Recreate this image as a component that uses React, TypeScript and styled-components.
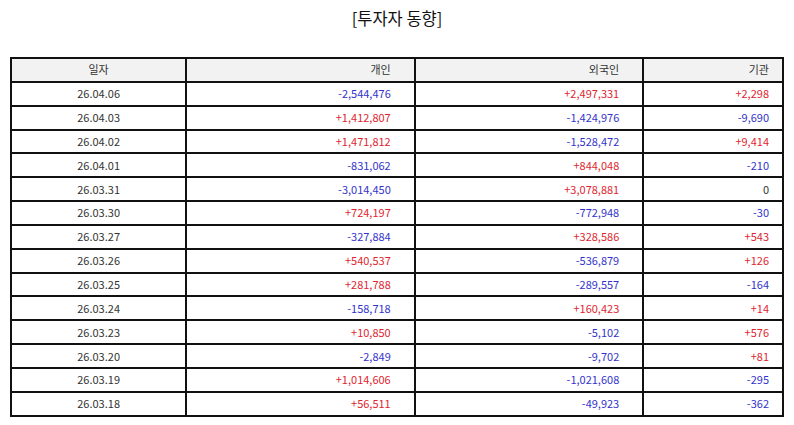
import styled, { createGlobalStyle } from "styled-components";

const GlobalStyle = createGlobalStyle`
  html, body {
    margin: 0;
    padding: 0;
    background: #ffffff;
  }
  body {
    font-family: "Noto Sans CJK KR", "Noto Sans", sans-serif;
  }
`;

const COLORS = {
  TEXT: "#333333",
  UP: "#e0252f",
  DOWN: "#3333cc",
  BORDER: "#111111",
  HEAD_BG: "#f2f2f2"
};

type Row = {
  date: string;
  person: number;
  foreign: number;
  inst: number;
};

const ROWS: Row[] = [
  { date: "26.04.06", person: -2544476, foreign: 2497331, inst: 2298 },
  { date: "26.04.03", person: 1412807, foreign: -1424976, inst: -9690 },
  { date: "26.04.02", person: 1471812, foreign: -1528472, inst: 9414 },
  { date: "26.04.01", person: -831062, foreign: 844048, inst: -210 },
  { date: "26.03.31", person: -3014450, foreign: 3078881, inst: 0 },
  { date: "26.03.30", person: 724197, foreign: -772948, inst: -30 },
  { date: "26.03.27", person: -327884, foreign: 328586, inst: 543 },
  { date: "26.03.26", person: 540537, foreign: -536879, inst: 126 },
  { date: "26.03.25", person: 281788, foreign: -289557, inst: -164 },
  { date: "26.03.24", person: -158718, foreign: 160423, inst: 14 },
  { date: "26.03.23", person: 10850, foreign: -5102, inst: 576 },
  { date: "26.03.20", person: -2849, foreign: -9702, inst: 81 },
  { date: "26.03.19", person: 1014606, foreign: -1021608, inst: -295 },
  { date: "26.03.18", person: 56511, foreign: -49923, inst: -362 }
];

const format = (n: number) => {
  const abs = Math.abs(n).toLocaleString("en-US");
  if (n > 0) return `+${abs}`;
  if (n < 0) return `-${abs}`;
  return "0";
};

const tone = (n: number): "up" | "down" | "flat" =>
  n > 0 ? "up" : n < 0 ? "down" : "flat";

const App = () => (
  <>
    <GlobalStyle />
    <Page>
      <Title>[투자자 동향]</Title>
      <Table>
        <colgroup>
          <col style={{ width: "22.7%" }} />
          <col style={{ width: "29.6%" }} />
          <col style={{ width: "29.6%" }} />
          <col style={{ width: "18.1%" }} />
        </colgroup>
        <thead>
          <tr>
            <HeadCell align="center">일자</HeadCell>
            <HeadCell align="right" pad={23}>개인</HeadCell>
            <HeadCell align="right" pad={23}>외국인</HeadCell>
            <HeadCell align="right" pad={13}>기관</HeadCell>
          </tr>
        </thead>
        <tbody>
          {ROWS.map(row => (
            <tr key={row.date}>
              <DateCell>{row.date}</DateCell>
              <NumCell tone={tone(row.person)} pad={23}>
                {format(row.person)}
              </NumCell>
              <NumCell tone={tone(row.foreign)} pad={23}>
                {format(row.foreign)}
              </NumCell>
              <NumCell tone={tone(row.inst)} pad={13}>
                {format(row.inst)}
              </NumCell>
            </tr>
          ))}
        </tbody>
      </Table>
    </Page>
  </>
);

const Page = styled.div`
  width: 794px;
  padding: 6px 10px 0;
  box-sizing: border-box;
`;

const Title = styled.h1`
  margin: 0 0 27px;
  text-align: center;
  font-size: 16.5px;
  font-weight: 400;
  line-height: 24px;
  color: #111111;
`;

const Table = styled.table`
  width: 100%;
  border-collapse: collapse;
  table-layout: fixed;
  font-size: 11px;
  color: ${COLORS.TEXT};
`;

const cellBase = `
  height: 21.85px;
  padding: 0;
  border: 2px solid ${COLORS.BORDER};
  line-height: 21px;
  white-space: nowrap;
`;

const HeadCell = styled.th<{ align: "center" | "right"; pad?: number }>`
  ${cellBase};
  background: ${COLORS.HEAD_BG};
  font-weight: 400;
  text-align: ${({ align }) => align};
  padding-right: ${({ pad }) => pad ?? 0}px;
`;

const DateCell = styled.td`
  ${cellBase};
  text-align: center;
`;

const NumCell = styled.td<{ tone: "up" | "down" | "flat"; pad: number }>`
  ${cellBase};
  text-align: right;
  padding-right: ${({ pad }) => pad}px;
  color: ${({ tone }) =>
    tone === "up" ? COLORS.UP : tone === "down" ? COLORS.DOWN : COLORS.TEXT};
`;

export default App;
